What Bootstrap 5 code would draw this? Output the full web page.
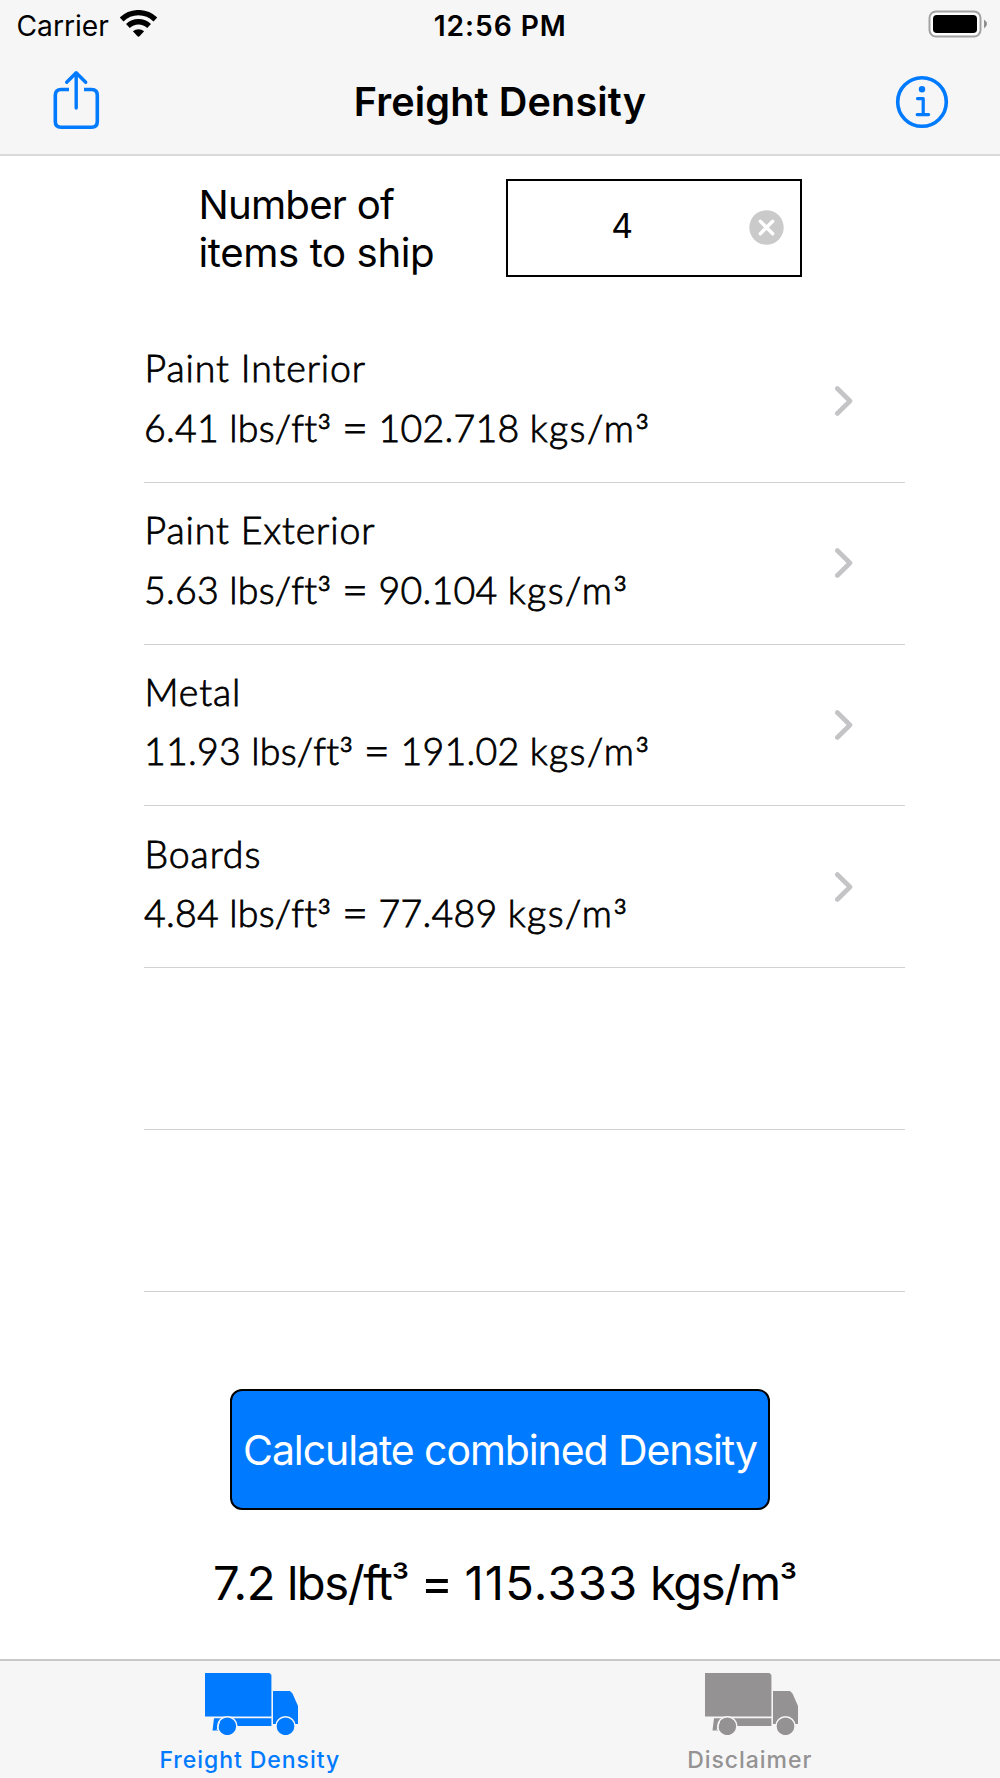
<!DOCTYPE html>
<html lang="en">
<head>
<meta charset="utf-8">
<meta name="viewport" content="width=device-width, initial-scale=1">
<title>Freight Density</title>
<link href="https://cdn.jsdelivr.net/npm/bootstrap@5.3.0/dist/css/bootstrap.min.css" rel="stylesheet">
<style>
  :root { --ios-blue: #007aff; --bar: #f6f6f6; }
  body { font-family: Inter, "Liberation Sans", sans-serif; color: #000; background: #fff; }
  svg { display: block; flex: none; }
  .screen { width: 1000px; height: 1778px; }
  .top-bars { background: var(--bar); border-bottom: 2px solid #dadada; height: 156px; }
  .status-bar { height: 50px; padding: 0 13px 0 16.5px; font-size: 28.2px; line-height: 50px; }
  .status-side { flex: 1 1 0; gap: 11.5px; padding-top: 1px; }
  .status-time { font-weight: 600; letter-spacing: .95px; padding: 1px 3px 0 0; }
  .title-bar { height: 104px; padding: 0 51px 0 53px; }
  .title-bar h1 { font-size: 39.6px; font-weight: 600; letter-spacing: .14px; line-height: 48px; padding-left: 5px; }
  .share-icon { margin-bottom: 6px; }
  .count-row { margin: 23px 0 0 198.5px; width: 603.5px; }
  .count-label { font-size: 40.2px; line-height: 48px; padding-top: 1.5px; }
  .count-label span { display: block; letter-spacing: -.79px; }
  .count-label span + span { letter-spacing: -.41px; }
  .count-box { width: 296px; height: 98px; border: 2.4px solid #000; padding: 0 16.5px 0 0; }
  .count-box output { font-size: 33.7px; padding: 0 12px 4px 0; }
  .count-box svg { margin-bottom: 1px; }
  .item-list { margin: 44px 95px 0 144px; width: 761px; }
  .item-list .item-row { height: 161.8px; border: 0; border-bottom: 1px solid #d2d2d2; border-radius: 0; padding: 17.4px 52.5px 0 0; background: none; color: #000;
    font: 300 37.5px/59.4px Lato, "Liberation Sans", sans-serif; -webkit-text-stroke: .8px #000; }
  .item-name { letter-spacing: .9px; padding-left: .5px; }
  .item-value { letter-spacing: .22px; white-space: nowrap; }
  .item-value span { letter-spacing: 1.4px; }
  .item-value i, .item-value b { font-style: normal; font-weight: 300; line-height: 0; }
  .item-value i { font-size: 1.12em; vertical-align: -6px; }
  .item-value b { font-size: 1.2em; vertical-align: -2px; }
  .item-row svg { margin-top: 48px; }
  .calc-btn { --bs-btn-bg: var(--ios-blue); --bs-btn-border-color: #000; --bs-btn-color: #fff; --bs-btn-border-width: 2.4px;
    width: 540px; height: 121px; margin-top: 97.2px; border-radius: 12px; font-size: 41px; letter-spacing: -1.09px; white-space: nowrap; padding: 2px 0 0 0; }
  .total { font-size: 47.2px; line-height: 60px; letter-spacing: -.3px; word-spacing: -1.4px; margin-top: 43px; padding-left: 10px; white-space: nowrap; }
  .total span { letter-spacing: -1.5px; }
  .total .figure-num { letter-spacing: 1.2px; }
  .total i, .total b { font-style: normal; font-weight: 400; line-height: 0; }
  .total i { font-size: .84em; vertical-align: 4px; }
  .total b { font-size: 1.05em; }
  .tab-bar { height: 119px; background: var(--bar); border-top: 2px solid #c8c8c8; }
  .tab-bar .nav-link { color: #949293; padding: 11px 0 0; font-size: 23px; font-weight: 500; line-height: 28px; letter-spacing: .95px; }
  .tab-bar .nav-link.active { color: var(--ios-blue); }
  .tab-bar svg { margin: 0 0 11px 3px; }
  .tab-bar span { margin-right: .5px; }
</style>
</head>
<body>
<svg width="0" height="0" class="position-absolute">
  <symbol id="truck" viewBox="0 0 95 63">
    <path fill="currentColor" d="M1 1H65.5L67.4 3V44.6H1Z M69 19H86L88.5 21.5L94 34V52H69Z M10 46.2H67.4V54H33L30 50H18L15.5 58.5H8.5Z"/>
    <g fill="currentColor" stroke="#f6f6f6" stroke-width="1.5"><circle cx="23.3" cy="54.3" r="9.6"/><circle cx="81.5" cy="54.3" r="9.6"/></g>
    <path d="M15.5 50L13 58" stroke="#f6f6f6" stroke-width="1"/>
  </symbol>
  <symbol id="chevron" viewBox="0 0 18 30">
    <path d="M2.3 2.5L15 15L2.3 27.5" fill="none" stroke="#c4c4c6" stroke-width="4.6" stroke-linecap="round" stroke-linejoin="round"/>
  </symbol>
</svg>

<div class="screen d-flex flex-column overflow-hidden">
  <header class="top-bars">
    <div class="status-bar d-flex align-items-center">
      <div class="status-side d-flex align-items-center">
        <span>Carrier</span>
        <svg width="37" height="27" viewBox="0 0 37 27" fill="none" stroke="#000" stroke-width="5.4" class="mb-1">
          <path d="M1.6 9.5A24.3 24.3 0 0 1 35.4 9.5"/>
          <path d="M7.9 16A15.3 15.3 0 0 1 29.1 16"/>
          <path d="M12.9 21.3A8.3 8.3 0 0 1 24.1 21.3L19.5 26.3Q18.5 27.2 17.5 26.3Z" fill="#000" stroke="none"/>
        </svg>
      </div>
      <div class="status-time">12:56 PM</div>
      <div class="status-side d-flex justify-content-end">
        <svg width="59" height="28" viewBox="0 0 59 28" class="mb-1">
          <rect x="1.5" y="1.5" width="51" height="25" rx="6.5" fill="#fdfdfd" stroke="#a1a1a1" stroke-width="2"/>
          <rect x="5" y="5" width="44" height="18" rx="3.8"/>
          <path d="M56 9.5Q59 11.5 59 14T56 18.5Z" fill="#8f8f8f"/>
        </svg>
      </div>
    </div>
    <nav class="title-bar d-flex align-items-center justify-content-between" aria-label="Title">
      <svg class="share-icon" width="47" height="60" viewBox="0 0 47 60" fill="none" stroke="#007aff" stroke-width="3.6" stroke-linejoin="round">
        <path d="M16 20.5H8Q2.3 20.5 2.3 26.2V52.5Q2.3 58.2 8 58.2H38.6Q44.3 58.2 44.3 52.5V26.2Q44.3 20.5 38.6 20.5H31"/>
        <path d="M23.2 39V4M13.7 13.3L23.2 3.8L32.7 13.3" stroke-linecap="round" stroke-width="3.4"/>
      </svg>
      <h1 class="m-0">Freight Density</h1>
      <svg width="54" height="54" viewBox="0 0 54 54" fill="none" stroke="#007aff" stroke-width="3.6">
        <circle cx="27" cy="27" r="24.3"/>
        <circle cx="27" cy="14.3" r="3.2" fill="#007aff" stroke="none"/>
        <path d="M22.5 23.6H28.2V39.5M22.2 39.6H33.6" stroke-width="3.2" stroke-linecap="round" stroke-linejoin="round"/>
      </svg>
    </nav>
  </header>

  <main class="d-flex flex-column">
    <div class="count-row d-flex justify-content-between">
      <div class="count-label"><span>Number of</span><span>items to ship</span></div>
      <div class="count-box d-flex align-items-center">
        <output class="flex-fill text-center">4</output>
        <svg width="35" height="35" viewBox="0 0 35 35">
          <circle cx="17.5" cy="17.5" r="17.2" fill="#cacaca"/>
          <path d="M11.3 11.3L23.7 23.7M23.7 11.3L11.3 23.7" stroke="#fff" stroke-width="3.4" stroke-linecap="round"/>
        </svg>
      </div>
    </div>

    <div class="item-list list-group rounded-0">
      <div class="item-row list-group-item d-flex justify-content-between">
        <div><div class="item-name">Paint Interior</div><div class="item-value">6.41 lbs/ft<i>³</i> <b>=</b> 102.718 <span>kgs/m</span><i>³</i></div></div>
        <svg width="18" height="30"><use href="#chevron"/></svg>
      </div>
      <div class="item-row list-group-item d-flex justify-content-between">
        <div><div class="item-name">Paint Exterior</div><div class="item-value">5.63 lbs/ft<i>³</i> <b>=</b> 90.104 <span>kgs/m</span><i>³</i></div></div>
        <svg width="18" height="30"><use href="#chevron"/></svg>
      </div>
      <div class="item-row list-group-item d-flex justify-content-between">
        <div><div class="item-name">Metal</div><div class="item-value">11.93 lbs/ft<i>³</i> <b>=</b> 191.02 <span>kgs/m</span><i>³</i></div></div>
        <svg width="18" height="30"><use href="#chevron"/></svg>
      </div>
      <div class="item-row list-group-item d-flex justify-content-between">
        <div><div class="item-name">Boards</div><div class="item-value">4.84 lbs/ft<i>³</i> <b>=</b> 77.489 <span>kgs/m</span><i>³</i></div></div>
        <svg width="18" height="30"><use href="#chevron"/></svg>
      </div>
      <div class="item-row list-group-item"></div>
      <div class="item-row list-group-item"></div>
    </div>

    <button type="button" class="btn calc-btn align-self-center">Calculate combined Density</button>
    <div class="total text-center">7.2 <span>lbs/ft</span><i>³</i> <b>=</b> <span class="figure-num">115.333</span> <span>kgs/m</span><i>³</i></div>
  </main>

  <nav class="tab-bar nav nav-justified mt-auto flex-nowrap" aria-label="Tabs">
    <a class="nav-link active d-flex flex-column align-items-center" href="#"><svg width="95" height="63"><use href="#truck"/></svg><span>Freight Density</span></a>
    <a class="nav-link d-flex flex-column align-items-center" href="#"><svg width="95" height="63"><use href="#truck"/></svg><span>Disclaimer</span></a>
  </nav>
</div>
<script src="https://cdn.jsdelivr.net/npm/bootstrap@5.3.0/dist/js/bootstrap.bundle.min.js"></script>
</body>
</html>
